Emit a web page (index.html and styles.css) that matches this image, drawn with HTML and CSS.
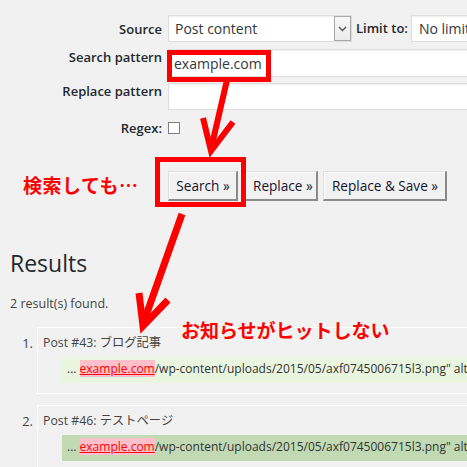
FILE: index.html
```html
<!DOCTYPE html>
<html lang="ja">
<head>
<meta charset="utf-8">
<title>Search Regex</title>
<link rel="stylesheet" href="styles.css">
</head>
<body>
<div class="page">
  <div class="form">
    <div class="form-row row-source">
      <label class="label label-mid">Source</label>
      <div class="select select-source">
        <span class="select-text">Post content</span>
        <span class="select-arrow"><svg width="9" height="6" viewBox="0 0 9 6"><path d="M1 1 L4.5 4.5 L8 1" fill="none" stroke="#555" stroke-width="1.4"/></svg></span>
      </div>
      <label class="label label-inline">Limit to:</label>
      <div class="select select-limit"><span class="select-text">No limit</span></div>
    </div>
    <div class="form-row row-search">
      <label class="label">Search pattern</label>
      <input class="input" type="text" value="example.com">
    </div>
    <div class="form-row row-replace">
      <label class="label">Replace pattern</label>
      <input class="input input-short" type="text" value="">
    </div>
    <div class="form-row row-regex">
      <label class="label label-regex">Regex:</label>
      <input class="checkbox" type="checkbox">
    </div>
  </div>

  <div class="actions">
    <button class="btn btn-search">Search »</button>
    <button class="btn btn-replace">Replace »</button>
    <button class="btn btn-save">Replace &amp; Save »</button>
  </div>

  <h2 class="results-title">Results</h2>
  <p class="found">2 result(s) found.</p>

  <ol class="results">
    <li class="result">
      <span class="num">1.</span>
      <div class="card">
        <div class="card-title">Post #43: ブログ記事</div>
        <div class="context context-light">... <a class="match">example.com</a>/wp-content/uploads/2015/05/axf0745006715l3.png" alt="</div>
      </div>
    </li>
    <li class="result">
      <span class="num">2.</span>
      <div class="card">
        <div class="card-title">Post #46: テストページ</div>
        <div class="context context-dark">... <a class="match">example.com</a>/wp-content/uploads/2015/05/axf0745006715l3.png" alt="</div>
      </div>
    </li>
  </ol>
</div>

<svg class="overlay" width="467" height="467" viewBox="0 0 467 467">
  <rect x="169.5" y="52.5" width="99" height="27" fill="none" stroke="#ff0000" stroke-width="5"/>
  <rect x="157.5" y="159.5" width="86" height="45" fill="none" stroke="#ff0000" stroke-width="5"/>
  <line x1="227" y1="80" x2="211" y2="149" stroke="#ff0000" stroke-width="6"/>
  <polyline points="203,118 211,151 233,122" fill="none" stroke="#ff0000" stroke-width="6" stroke-linejoin="miter" stroke-miterlimit="10"/>
  <line x1="182" y1="214" x2="143" y2="324" stroke="#ff0000" stroke-width="7"/>
  <polyline points="139,293 143,326 168,300" fill="none" stroke="#ff0000" stroke-width="7" stroke-linejoin="miter" stroke-miterlimit="10"/>
</svg>
<div class="note note-search">検索しても…</div>
<div class="note note-hit">お知らせがヒットしない</div>
</body>
</html>
```

FILE: styles.css
```css
html, body {
  margin: 0;
  padding: 0;
  overflow: hidden;
}

body {
  position: relative;
  width: 467px;
  height: 467px;
  background: #f1f1f1;
  color: #444;
  font-family: "Open Sans", "Noto Sans CJK JP", sans-serif;
  font-size: 13px;
}

.page {
  padding-top: 15px;
}

/* ---------- form ---------- */
.form-row {
  display: flex;
  align-items: flex-start;
}

.row-source {
  height: 27px;
  align-items: center;
}

.row-search {
  margin-top: 7px;
}

.row-replace {
  margin-top: 6px;
}

.row-regex {
  margin-top: 12px;
  align-items: center;
}

.label {
  flex: 0 0 162px;
  margin-right: 6px;
  text-align: right;
  font-size: 13px;
  font-weight: 600;
  line-height: 18px;
  color: #23282d;
}

.row-search .label,
.row-replace .label {
  margin-top: -1px;
}

.label-mid {
  margin-top: 1px;
}

.label-regex {
  line-height: 12px;
}

.label-inline {
  flex: 0 0 auto;
  margin: -2px 3px 0 4px;
}

.select {
  box-sizing: border-box;
  flex: none;
  display: flex;
  align-items: center;
  height: 27px;
  background: #fff;
  border: 1px solid #ddd;
  box-shadow: inset 0 1px 2px rgba(0, 0, 0, 0.07);
  font-size: 14px;
  color: #32373c;
  white-space: nowrap;
}

.select-source {
  width: 184px;
  padding-left: 6px;
}

.select-limit {
  width: 200px;
  padding-left: 7px;
}

.select-arrow {
  box-sizing: border-box;
  display: flex;
  align-items: center;
  justify-content: center;
  width: 17px;
  height: 100%;
  margin-left: auto;
  border: 1px solid #a9a9a9;
  background: linear-gradient(#f7f7f7, #ececec);
}

.input {
  box-sizing: border-box;
  flex: none;
  width: 420px;
  height: 28px;
  margin: 0;
  padding: 0 5px;
  background: #fff;
  border: 1px solid #ddd;
  box-shadow: inset 0 1px 2px rgba(0, 0, 0, 0.07);
  font-family: "Open Sans", sans-serif;
  font-size: 14px;
  color: #32373c;
  outline: none;
}

.input-short {
  height: 27px;
}

.checkbox {
  appearance: none;
  box-sizing: border-box;
  flex: none;
  width: 12px;
  height: 12px;
  margin: 0;
  background: #fff;
  border: 1px solid #7e7e7e;
}

/* ---------- buttons ---------- */
.actions {
  display: flex;
  margin-top: 37px;
  padding-left: 168px;
}

.btn {
  box-sizing: border-box;
  flex: none;
  height: 30px;
  margin: 0;
  padding: 0 6px 0 7px;
  background: #f2f2f2;
  border-top: 1px solid #dedede;
  border-left: 1px solid #dedede;
  border-right: 2px solid #8a8a8a;
  border-bottom: 2px solid #8a8a8a;
  box-shadow: inset 1px 1px 0 #fff;
  font-family: "Open Sans", sans-serif;
  font-size: 13.6px;
  line-height: 26px;
  color: #14142e;
  white-space: nowrap;
}

.btn-search {
  width: 70px;
}

.btn-replace {
  width: 73px;
  margin-left: 7px;
}

.btn-save {
  width: 124px;
  margin-left: 5px;
}

/* ---------- results ---------- */
.results-title {
  margin: 48px 0 0;
  padding-left: 10px;
  font-size: 23px;
  font-weight: 400;
  line-height: 29px;
  color: #23282d;
}

.found {
  margin: 17px 0 0;
  padding-left: 10px;
  font-size: 12.5px;
  line-height: 18px;
  color: #444;
}

.results {
  width: 700px;
  margin: 14px 0 0;
  padding: 0;
  list-style: none;
}

.result {
  display: flex;
  align-items: flex-start;
}

.result + .result {
  margin-top: 11px;
}

.num {
  box-sizing: border-box;
  flex: 0 0 37px;
  padding: 7px 4px 0 0;
  text-align: right;
  font-size: 13px;
  line-height: 18px;
  color: #444;
}

.card {
  flex: 1;
  padding: 6px 0 10px 5px;
  border: 1px solid #fff;
}

.card-title {
  font-size: 12.3px;
  line-height: 18px;
  color: #444;
}

.context {
  margin: 5px 0 0 19px;
  padding: 3px 5px 5px;
  font-size: 12px;
  line-height: 18px;
  color: #333;
  white-space: nowrap;
}

.context-light {
  background: #e9f5df;
}

.context-dark {
  background: #c1dab4;
}

.match {
  background: #ffc0cb;
  color: #ff0000;
  text-decoration: underline;
}

/* ---------- annotations ---------- */
.overlay {
  position: absolute;
  left: 0;
  top: 0;
  pointer-events: none;
}

.note {
  position: absolute;
  font-family: "Noto Sans CJK JP", sans-serif;
  font-size: 19px;
  font-weight: 700;
  line-height: 19px;
  color: #ff0000;
  white-space: nowrap;
}

.note-search {
  left: 23px;
  top: 175px;
  letter-spacing: 0.5px;
}

.note-hit {
  left: 181px;
  top: 320px;
}
```
